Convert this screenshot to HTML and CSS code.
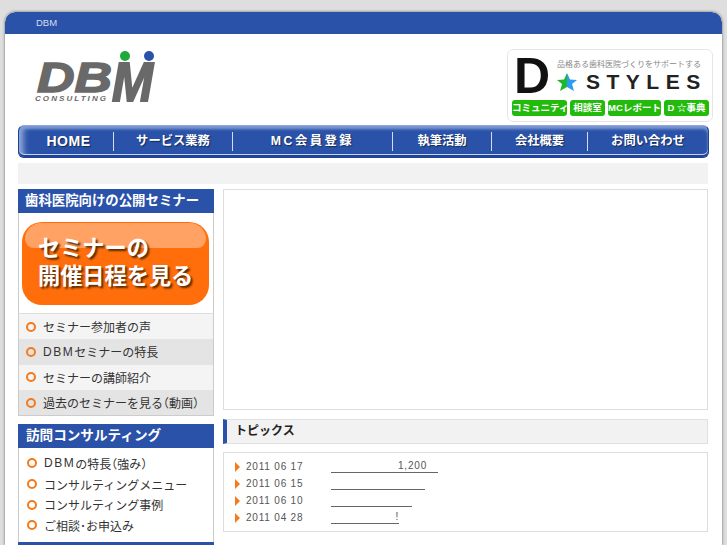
FILE: index.html
```html
<!DOCTYPE html>
<html lang="ja">
<head>
    <meta charset="UTF-8">
    <meta name="viewport" content="width=device-width, initial-scale=1.0">
    <title>DBM</title>
    <link rel="stylesheet" href="styles.css">
</head>
<body>
    <div class="page">
        <div class="top-bar">DBM</div>

        <div class="header">
            <svg class="logo" width="124" height="70" viewBox="0 0 124 70">
                <circle cx="91" cy="7" r="5" fill="#1fa83c"/>
                <circle cx="115" cy="7" r="5" fill="#2a52a8"/>
                <text class="logo-big" x="3" y="43" textLength="75" lengthAdjust="spacingAndGlyphs">DB</text>
                <text class="logo-big" transform="translate(78 52) scale(1 1.3)" textLength="41" lengthAdjust="spacingAndGlyphs">M</text>
                <text class="logo-small" x="1" y="52" textLength="71">CONSULTING</text>
            </svg>
            <div class="dstyles">
                <div class="dstyles-top">
                    <span class="dstyles-d">D</span>
                    <div class="dstyles-right">
                        <div class="dstyles-copy">品格ある歯科医院づくりをサポートする</div>
                        <div class="dstyles-name">
                            <svg width="20" height="19" viewBox="0 0 20 19">
                                <polygon points="10,0 10,14 3,18 5,11 0,7 7,6.500" fill="#1eb82c"/>
                                <polygon points="10,0 13,6.500 20,7 15,11 17,18 10,14" fill="#2b9cf0"/>
                            </svg>
                            <span>STYLES</span>
                        </div>
                    </div>
                </div>
                <div class="dstyles-links">
                    <a class="d1">コミュニティ</a>
                    <a class="d2">相談室</a>
                    <a class="d3">MCレポート</a>
                    <a class="d4">D ☆事典</a>
                </div>
            </div>
        </div>

        <div class="nav">
            <a>HOME</a>
            <a>サービス業務</a>
            <a class="wide">MC会員登録</a>
            <a>執筆活動</a>
            <a>会社概要</a>
            <a>お問い合わせ</a>
        </div>

        <div class="crumb"></div>

        <div class="columns">
            <div class="side">
                <h2 class="side-title">歯科医院向けの公開セミナー</h2>
                <div class="banner-wrap">
                    <div class="banner">
                        <div class="banner-gloss"></div>
                        <div class="banner-text">セミナーの<br>開催日程を見る</div>
                    </div>
                </div>
                <ul class="side-menu striped">
                    <li>セミナー参加者の声</li>
                    <li><span class="latin">DBM</span>セミナーの特長</li>
                    <li>セミナーの講師紹介</li>
                    <li>過去のセミナーを見る<span class="paren">（動画）</span></li>
                </ul>

                <h2 class="side-title second">訪問コンサルティング</h2>
                <ul class="side-menu plain">
                    <li><span class="latin">DBM</span>の特長<span class="paren">（強み）</span></li>
                    <li>コンサルティングメニュー</li>
                    <li>コンサルティング事例</li>
                    <li>ご相談･お申込み</li>
                </ul>
                <h2 class="side-title">&nbsp;</h2>
            </div>

            <div class="main">
                <div class="flash"></div>
                <h3 class="topics-title">トピックス</h3>
                <div class="topics">
                    <div class="topic"><span class="date">2011 06 17</span><a class="t1">1,200</a></div>
                    <div class="topic"><span class="date">2011 06 15</span><a class="t2"></a></div>
                    <div class="topic"><span class="date">2011 06 10</span><a class="t3"></a></div>
                    <div class="topic"><span class="date">2011 04 28</span><a class="t4">!</a></div>
                </div>
            </div>
        </div>
    </div>
</body>
</html>
```

FILE: styles.css
```css
html, body {
    height: 545px;
    overflow: hidden;
}

body {
    margin: 0;
    background: #dedede;
    font-family: "Liberation Sans", "Noto Sans CJK JP", sans-serif;
    color: #333;
}

.page {
    margin: 12px 5px 0;
    height: 533px;
    overflow: hidden;
    background: #fff;
    border-radius: 10px 10px 0 0;
    box-shadow: 0 0 3px #666;
}

.top-bar {
    height: 22px;
    padding-left: 31px;
    background: #2a52a8;
    border-radius: 10px 10px 0 0;
    color: #d5def0;
    font-size: 9.500px;
    line-height: 22px;
}

/* header */
.header {
    height: 91px;
    display: flex;
    justify-content: space-between;
    padding: 0 9px 0 29px;
}

.logo {
    margin-top: 15px;
}

.logo-big {
    font-family: "Liberation Sans", sans-serif;
    font-size: 42px;
    font-weight: bold;
    font-style: italic;
    fill: #696969;
    stroke: #696969;
    stroke-width: 1.500px;
}

.logo-small {
    font-family: "Liberation Sans", sans-serif;
    font-size: 8px;
    font-weight: bold;
    font-style: italic;
    fill: #696969;
}

.dstyles {
    width: 206px;
    height: 73px;
    margin-top: 15px;
    box-sizing: border-box;
    border: 1px solid #e6e6e6;
    border-radius: 6px;
}

.dstyles-top {
    height: 50px;
    display: flex;
    padding-left: 6px;
}

.dstyles-d {
    width: 43px;
    font-size: 50px;
    font-weight: bold;
    line-height: 52px;
    color: #111;
}

.dstyles-right {
    padding-top: 9px;
}

.dstyles-copy {
    font-size: 8px;
    line-height: 11px;
    color: #888;
    white-space: nowrap;
}

.dstyles-name {
    display: flex;
    align-items: center;
    gap: 9px;
    margin-top: 2px;
}

.dstyles-name span {
    font-size: 21px;
    font-weight: bold;
    letter-spacing: 6.500px;
    line-height: 20px;
    color: #222;
}

.dstyles-links {
    display: flex;
    gap: 3px;
    padding-left: 4px;
}

.dstyles-links a {
    height: 16px;
    border-radius: 3px;
    background: #22bb0c;
    color: #fff;
    font-size: 9.500px;
    font-weight: bold;
    line-height: 16px;
    text-align: center;
    white-space: nowrap;
}

.d1 { width: 55px; }
.d2 { width: 35px; }
.d3 { width: 53px; }
.d4 { width: 45px; }

/* navigation */
.nav {
    width: 691px;
    height: 33px;
    margin-left: 13px;
    box-sizing: border-box;
    display: grid;
    grid-template-columns: 94px 119px 160px 99px 96px 1fr;
    align-items: center;
    background: #2a52a8;
    border: 1px solid #1f4497;
    border-top-color: #8ea6d8;
    border-radius: 6px;
    box-shadow: inset 0 -2px 0 #1f4497, inset 0 -3px 0 #c6d3ee, inset 0 3px 3px #7f9bd6, inset 8px 0 6px -4px #9db2e0;
}

.nav a {
    height: 19px;
    margin-bottom: 1px;
    border-left: 1px solid #d4dcf0;
    color: #fff;
    font-size: 12.300px;
    font-weight: bold;
    line-height: 19px;
    text-align: center;
    text-shadow: 1px 1px 1px #14295a;
}

.nav a:first-child {
    border-left: none;
    padding-left: 5px;
    font-size: 14px;
    letter-spacing: 0.500px;
}

.nav a.wide {
    letter-spacing: 2.500px;
}

.crumb {
    width: 690px;
    height: 21px;
    margin: 5px 0 0 13px;
    background: #f2f2f2;
}

/* columns */
.columns {
    display: flex;
    gap: 9px;
    margin: 5px 0 0 13px;
    width: 690px;
}

.side {
    width: 196px;
    flex: none;
}

.side-title {
    margin: 0;
    height: 24px;
    padding-left: 7px;
    background: #2a52a8;
    color: #fff;
    font-size: 13.400px;
    font-weight: bold;
    line-height: 24px;
}

.side-title.second {
    margin-top: 8px;
    padding-left: 8px;
    font-size: 13.600px;
}

.banner-wrap {
    height: 100px;
    box-sizing: border-box;
    padding: 9px 3px 0;
    border: solid #ccc;
    border-width: 0 1px;
}

.banner {
    position: relative;
    height: 83px;
    width: 187px;
    border-radius: 20px;
    background: #ff6e0a;
}

.banner-gloss {
    position: absolute;
    top: 1px;
    left: 3px;
    right: 3px;
    height: 25px;
    border-radius: 18px 18px 10px 10px;
    background: #ffa264;
}

.banner-text {
    position: relative;
    padding: 13px 0 0 16px;
    color: #fff;
    font-size: 22.200px;
    font-weight: bold;
    line-height: 28px;
    text-shadow: 2px 2px 2px #5a2a00;
}

.side-menu {
    margin: 0;
    padding: 0;
    list-style: none;
    border: 1px solid #ccc;
    border-width: 0 1px 1px;
    font-size: 12px;
    color: #333;
}

.side-menu li {
    display: flex;
    align-items: center;
    white-space: nowrap;
}

.side-menu li::before {
    content: "";
    width: 6px;
    height: 6px;
    flex: none;
    border: 2px solid #f47a1c;
    border-radius: 50%;
}

.latin {
    letter-spacing: 1.500px;
}

.paren {
    font-family: "Noto Sans CJK JP", sans-serif;
    font-feature-settings: "halt";
}

.striped {
    border-top: 1px solid #ddd;
}

.striped li {
    height: 25.300px;
    padding-left: 7px;
    background: #f4f4f4;
}

.striped li:nth-child(even) {
    background: #e4e4e4;
}

.striped li::before {
    margin-right: 7px;
}

.plain {
    padding: 5px 0 6px;
    border-bottom: none;
}

.plain li {
    height: 20.600px;
    padding-left: 8px;
}

.plain li::before {
    margin-right: 7px;
}

/* main column */
.main {
    flex: 1;
}

.flash {
    height: 221px;
    box-sizing: border-box;
    border: 1px solid #ddd;
}

.topics-title {
    margin: 9px 0 0;
    height: 25px;
    box-sizing: border-box;
    padding-left: 8px;
    background: #f2f2f2;
    border: 1px solid #e0e0e0;
    border-left: 4px solid #2a52a8;
    color: #222;
    font-size: 12px;
    font-weight: bold;
    line-height: 23px;
}

.topics {
    height: 80px;
    margin-top: 8px;
    box-sizing: border-box;
    padding-top: 5px;
    border: 1px solid #ddd;
}

.topic {
    height: 17px;
    display: flex;
    align-items: center;
    padding-left: 11px;
    font-size: 10px;
    color: #555;
}

.topic::before {
    content: "";
    border-left: 5px solid #f47a1c;
    border-top: 5px solid transparent;
    border-bottom: 5px solid transparent;
    margin-right: 6px;
}

.date {
    width: 85px;
    letter-spacing: 0.800px;
}

.topic a {
    height: 13px;
    box-sizing: border-box;
    border-bottom: 1px solid #666;
    line-height: 12px;
    text-align: right;
    letter-spacing: 0.800px;
}

.t1 { width: 107px; padding-right: 11px; }
.t2 { width: 94px; }
.t3 { width: 81px; }
.t4 { width: 68px; }
```
